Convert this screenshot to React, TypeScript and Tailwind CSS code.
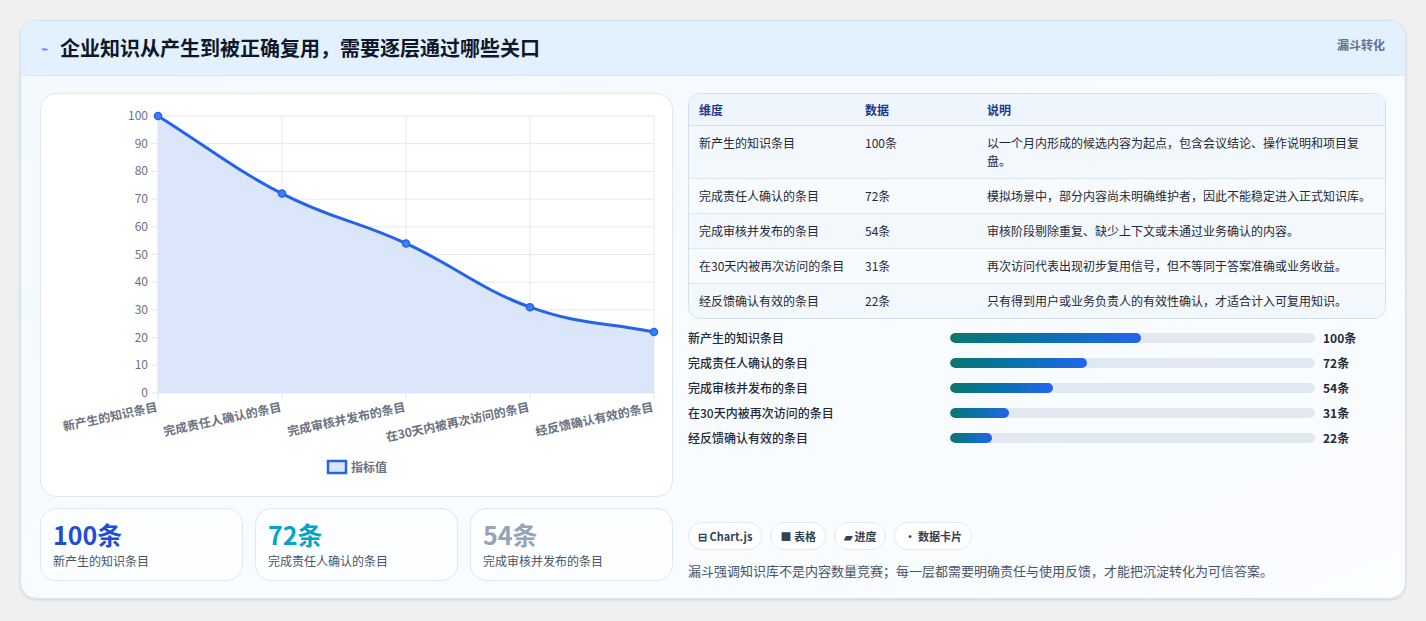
const rows = [
  { name: "新产生的知识条目", v: 100, desc: "以一个月内形成的候选内容为起点，包含会议结论、操作说明和项目复盘。" },
  { name: "完成责任人确认的条目", v: 72, desc: "模拟场景中，部分内容尚未明确维护者，因此不能稳定进入正式知识库。" },
  { name: "完成审核并发布的条目", v: 54, desc: "审核阶段剔除重复、缺少上下文或未通过业务确认的内容。" },
  { name: "在30天内被再次访问的条目", v: 31, desc: "再次访问代表出现初步复用信号，但不等同于答案准确或业务收益。" },
  { name: "经反馈确认有效的条目", v: 22, desc: "只有得到用户或业务负责人的有效性确认，才适合计入可复用知识。" },
];

function Chart() {
  const x0 = 117, x1 = 613, y0 = 22, y1 = 299;
  const xs = rows.map((_, i) => x0 + (i * (x1 - x0)) / 4);
  const ys = rows.map((r) => y1 - (r.v * (y1 - y0)) / 100);
  let d = `M${xs[0]},${ys[0]}`;
  for (let i = 1; i < xs.length; i++) {
    const dx = (xs[i] - xs[i - 1]) * 0.4;
    const s0 = i > 1 ? (ys[i] - ys[i - 2]) / 2 : ys[i] - ys[i - 1];
    const s1 = i < xs.length - 1 ? (ys[i + 1] - ys[i - 1]) / 2 : ys[i] - ys[i - 1];
    d += ` C${xs[i - 1] + dx},${ys[i - 1] + s0 * 0.4} ${xs[i] - dx},${ys[i] - s1 * 0.4} ${xs[i]},${ys[i]}`;
  }
  return (
    <svg width="632" height="402" className="block">
      {Array.from({ length: 11 }, (_, k) => {
        const y = y1 - (k * (y1 - y0)) / 10;
        return (
          <g key={k}>
            <line x1={x0 - 6} x2={x1} y1={y} y2={y} stroke="#e5e7eb" />
            <text x={x0 - 10} y={y + 4} textAnchor="end" fontSize="12" fill="#6b7280">{k * 10}</text>
          </g>
        );
      })}
      {xs.map((x, i) => (
        <g key={i}>
          <line x1={x} x2={x} y1={y0} y2={y1 + 6} stroke="#e5e7eb" />
          <text x={x} y={y1 + 18} textAnchor="end" fontSize="12" fontWeight="600" fill="#6b7280" transform={`rotate(-12 ${x} ${y1 + 18})`}>
            {rows[i].name}
          </text>
        </g>
      ))}
      <path d={`${d} L${x1},${y1} L${x0},${y1} Z`} fill="#dbe6fb" />
      <path d={d} fill="none" stroke="#2563eb" strokeWidth="3" />
      {xs.map((x, i) => (
        <circle key={i} cx={x} cy={ys[i]} r="3.5" fill="#3b82f6" stroke="#2563eb" strokeWidth="1.5" />
      ))}
      <rect x="287" y="367" width="18" height="12" fill="#dbe6fb" stroke="#2563eb" strokeWidth="2.5" />
      <text x="310" y="378" fontSize="12" fontWeight="600" fill="#6b7280">指标值</text>
    </svg>
  );
}

export default function App() {
  const font = { fontFamily: '"Noto Sans CJK SC", "Noto Sans", sans-serif' };
  return (
    <div className="w-[1426px] h-[621px] bg-[#f0f0f0] pt-[20px] pl-[20px]" style={font}>
      <div className="w-[1386px] h-[579px] rounded-2xl border border-[#cfe3f2] bg-gradient-to-br from-[#f4f9fe] to-[#fbfdff] overflow-hidden shadow-sm">
        <div className="h-[55px] bg-[#e3f0fd] border-b border-[#d6e7f8] flex items-center justify-between pl-[20px] pr-[20px]">
          <div className="flex items-center gap-3">
            <span className="text-[#3b82f6] text-xs">⌁</span>
            <span className="text-[20px] font-bold text-[#0f172a]">企业知识从产生到被正确复用，需要逐层通过哪些关口</span>
          </div>
          <span className="text-xs font-semibold text-[#64748b] self-start mt-[16px]">漏斗转化</span>
        </div>
        <div className="flex gap-[15px] pl-[19px] pr-[18px] pt-[17px]">
          <div className="w-[633px] flex flex-col gap-[11px]">
            <div className="h-[404px] rounded-2xl border border-[#dde8f2] bg-white">
              <Chart />
            </div>
            <div className="grid grid-cols-3 gap-3">
              {[
                ["100条", "text-[#1d4ed8]", rows[0].name],
                ["72条", "text-[#06a5c7]", rows[1].name],
                ["54条", "text-[#94a3b8]", rows[2].name],
              ].map(([n, c, l]) => (
                <div key={n} className="h-[73px] rounded-2xl border border-[#dde8f2] bg-white/70 px-3 pt-[10px]">
                  <div className={`text-[25px] font-bold leading-[30px] ${c}`}>{n}</div>
                  <div className="text-xs text-[#475569] mt-[4px]">{l}</div>
                </div>
              ))}
            </div>
          </div>
          <div className="w-[698px] flex flex-col">
            <div className="rounded-xl border border-[#d3e0ec] overflow-hidden text-xs text-[#1f2937]">
              <div className="flex h-[32px] items-center bg-[#eef5fd] border-b border-[#d3e0ec] font-semibold text-[#1e3a8a]">
                <div className="w-[176px] pl-[10px]">维度</div>
                <div className="w-[122px]">数据</div>
                <div className="flex-1">说明</div>
              </div>
              {rows.map((r, i) => (
                <div key={i} className={`flex items-start border-b border-[#e2e8f0] last:border-b-0 py-[8px] ${i % 2 ? "bg-[#f8fbfe]" : "bg-[#f3f8fd]"}`}>
                  <div className="w-[176px] pl-[10px] leading-[18px]">{r.name}</div>
                  <div className="w-[122px] leading-[18px]">{r.v}条</div>
                  <div className="flex-1 pr-[10px] leading-[18px]">{r.desc}</div>
                </div>
              ))}
            </div>
            <div className="flex flex-col gap-[8px] mt-[10px]">
              {rows.map((r, i) => (
                <div key={i} className="flex items-center h-[17px] text-xs font-medium text-[#1f2937]">
                  <div className="w-[262px]">{r.name}</div>
                  <div className="w-[365px] h-[10px] rounded-full bg-[#e2e8f0] overflow-hidden">
                    <div className="h-full rounded-full bg-gradient-to-r from-[#0f766e] to-[#2563eb]" style={{ width: `${r.v * 0.523}%` }} />
                  </div>
                  <div className="ml-2 font-semibold">{r.v}条</div>
                </div>
              ))}
            </div>
            <div className="flex gap-2 mt-[76px] text-[11px] font-semibold text-[#334155]">
              {["⊟ Chart.js", "■ 表格", "▰ 进度", "• 数据卡片"].map((t) => (
                <span key={t} className="h-[28px] px-[9px] flex items-center rounded-full border border-[#e2e8f0] bg-white">{t}</span>
              ))}
            </div>
            <div className="mt-[11px] text-[13px] text-[#475569]">漏斗强调知识库不是内容数量竞赛；每一层都需要明确责任与使用反馈，才能把沉淀转化为可信答案。</div>
          </div>
        </div>
      </div>
    </div>
  );
}
